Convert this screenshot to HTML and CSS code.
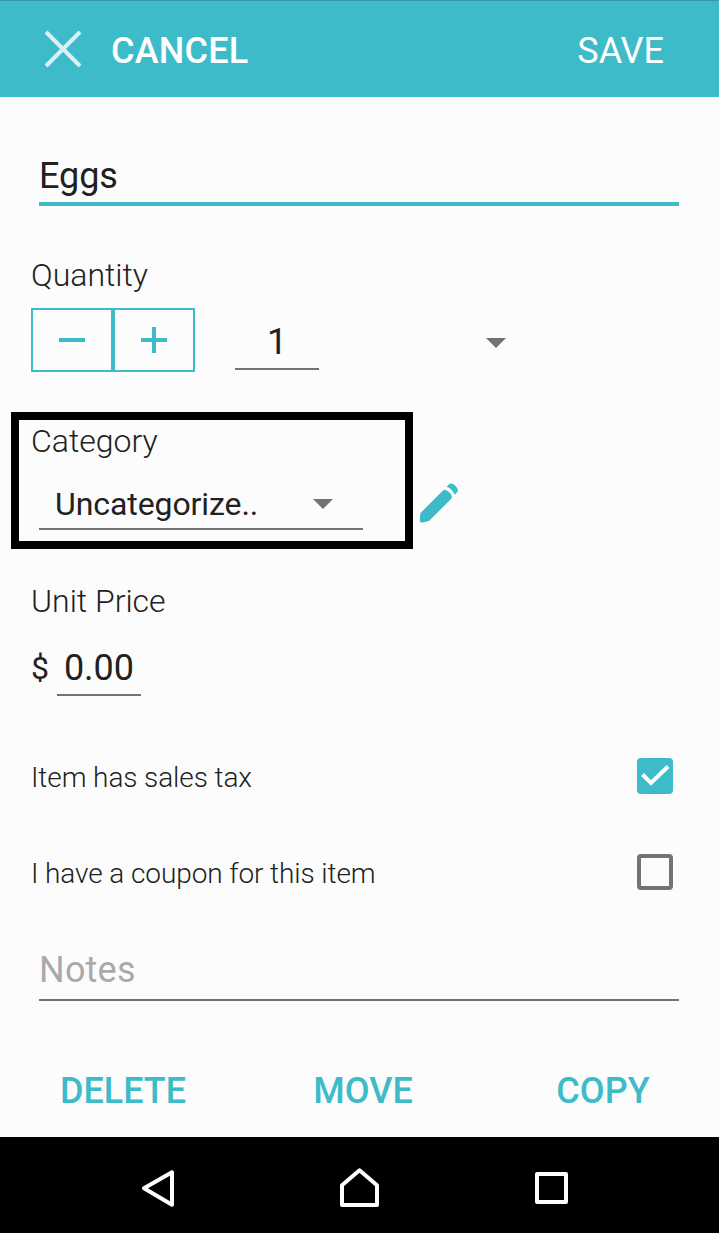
FILE: index.html
```html
<!DOCTYPE html>
<html lang="en">
<head>
    <meta charset="UTF-8">
    <meta name="viewport" content="width=device-width, initial-scale=1.0">
    <title>Edit item</title>
    <link rel="stylesheet" href="styles.css">
</head>
<body>
    <header class="toolbar">
        <div class="cancel">
            <svg class="close-icon" width="38" height="38" viewBox="0 0 38 38">
                <path d="M2 2L36 36M36 2L2 36"/>
            </svg>
            <span>CANCEL</span>
        </div>
        <span class="save">SAVE</span>
    </header>

    <main class="form">
        <div class="field name">Eggs</div>

        <section class="quantity">
            <div class="label">Quantity</div>
            <div class="quantity-row">
                <div class="stepper">
                    <div class="step">
                        <svg width="26" height="26" viewBox="0 0 26 26"><path d="M0 13H26"/></svg>
                    </div>
                    <div class="step">
                        <svg width="26" height="26" viewBox="0 0 26 26"><path d="M0 13H26M13 0V26"/></svg>
                    </div>
                </div>
                <div class="small-input">1</div>
                <svg class="arrow unit-arrow" width="20" height="10" viewBox="0 0 20 10"><path d="M0 0H20L10 10Z"/></svg>
            </div>
        </section>

        <section class="category-row">
            <div class="category">
                <div class="label">Category</div>
                <div class="select">
                    <span>Uncategorize..</span>
                    <svg class="arrow" width="20" height="10" viewBox="0 0 20 10"><path d="M0 0H20L10 10Z"/></svg>
                </div>
            </div>
            <svg class="pencil" width="40" height="40" viewBox="0 0 40 40">
                <path d="M1.500 30L24 7.500Q25.300 6.400 27 7.200C30 8.500 32 10.500 32.800 13.200Q33.200 14.800 32 16L10 38L5 39.200Q1.200 39.800 .9 38.500Q.5 37.500 1.500 30Z"/>
                <path d="M27.600 3.800L30 1.300Q31.700 0 33.400 .8C36 2 38 4 38.800 6.600Q39.100 8.300 38 9.500L35.700 11.700C34.500 8.300 31.500 5.200 27.600 3.800Z"/>
            </svg>
        </section>

        <section class="price">
            <div class="label">Unit Price</div>
            <div class="price-row">
                <span class="currency">$</span>
                <div class="small-input">0.00</div>
            </div>
        </section>

        <div class="option">
            <span>Item has sales tax</span>
            <div class="checkbox checked">
                <svg width="36" height="36" viewBox="0 0 36 36"><path d="M5.500 16.500L14 25L31 8.500"/></svg>
            </div>
        </div>
        <div class="option">
            <span>I have a coupon for this item</span>
            <div class="checkbox"></div>
        </div>

        <div class="field notes">Notes</div>

        <div class="actions">
            <span>DELETE</span>
            <span>MOVE</span>
            <span>COPY</span>
        </div>
    </main>

    <nav class="navbar">
        <svg width="56" height="44" viewBox="0 0 56 44"><path d="M5 22.300L33 6.300V38.700Z"/></svg>
        <svg width="56" height="44" viewBox="0 0 56 44"><path d="M11 19.200L28.500 4.300L46 19.200V39H11Z"/></svg>
        <svg width="56" height="44" viewBox="0 0 56 44"><path d="M14 8H43V36H14Z"/></svg>
    </nav>
</body>
</html>
```

FILE: styles.css
```css
* {
    box-sizing: border-box;
}
body {
    margin: 0;
    font-family: Roboto, sans-serif;
    font-size: 36px;
    color: #212121;
    background: #fcfcfc;
    overflow: hidden;
}
svg {
    display: block;
    flex: none;
    fill: none;
}

/* top bar */
.toolbar {
    display: flex;
    align-items: center;
    justify-content: space-between;
    height: 97px;
    padding: 4px 55px 0 44px;
    border-top: 1px solid #3498a2;
    background: #3dbbc8;
    color: #fff;
}
.cancel {
    display: flex;
    align-items: center;
    gap: 29px;
    font-weight: 500;
    letter-spacing: 0.2px;
}
.close-icon {
    margin-top: -4px;
    stroke: #d8f1f4;
    stroke-width: 4;
}

/* form */
.form {
    height: 1040px;
    padding-top: 53px;
}
.field {
    margin: 0 40px 0 39px;
}
.name {
    line-height: 52px;
    border-bottom: 4px solid #3dbbc8;
    letter-spacing: -0.1px;
}
.label {
    font-size: 32px;
    font-weight: 300;
    line-height: 40px;
}
.small-input {
    width: 84px;
    line-height: 52px;
    text-align: center;
    border-bottom: 2px solid #737373;
}
.arrow {
    fill: #737373;
}

.quantity {
    padding: 49px 31px 0;
}
.quantity-row {
    display: flex;
    align-items: flex-end;
    height: 64px;
    margin-top: 13px;
}
.quantity-row .small-input {
    margin: 0 0 2px 40px;
}
.unit-arrow {
    margin: 0 0 24px 167px;
}
.stepper {
    display: flex;
}
.step {
    display: flex;
    align-items: center;
    justify-content: center;
    width: 82px;
    height: 64px;
    border: 2px solid #3dbbc8;
}
.step path {
    stroke: #3dbbc8;
    stroke-width: 4;
}

.category-row {
    display: flex;
    align-items: flex-end;
    padding: 40px 11px 0;
}
.category {
    width: 402px;
    height: 137px;
    padding: 1px 12px 0;
    border: 8px solid #000;
}
.select {
    display: flex;
    align-items: center;
    justify-content: space-between;
    width: 324px;
    margin: 19px 0 0 8px;
    padding: 0 30px 0 16px;
    border-bottom: 2px solid #737373;
    font-size: 32px;
    line-height: 48px;
    letter-spacing: -0.08px;
}
.pencil {
    margin: 0 0 26px 6px;
    fill: #3dbbc8;
}

.price {
    padding: 32px 31px 0;
}
.price-row {
    display: flex;
    margin-top: 21px;
}
.currency {
    width: 26px;
    font-size: 32px;
    line-height: 52px;
}

.option {
    display: flex;
    align-items: center;
    justify-content: space-between;
    height: 36px;
    margin: 60px 46px 0 31px;
    font-size: 28px;
    font-weight: 300;
    letter-spacing: -0.1px;
}
.option span {
    padding-top: 2px;
}
.price + .option {
    margin-top: 62px;
}
.checkbox {
    width: 36px;
    height: 36px;
    border: 4px solid #737373;
    border-radius: 4px;
}
.checked {
    border: none;
    background: #3dbbc8;
}
.checked path {
    stroke: #fff;
    stroke-width: 4;
}

.notes {
    margin-top: 50px;
    padding-top: 2px;
    line-height: 57px;
    letter-spacing: 0.2px;
    color: #aaa;
    border-bottom: 2px solid #737373;
}
.actions {
    display: grid;
    grid-template-columns: repeat(3, 240px);
    padding: 69px 0 0 3px;
    font-weight: 500;
    line-height: 42px;
    text-align: center;
    color: #3dbbc8;
}

/* system navigation */
.navbar {
    display: flex;
    gap: 136px;
    height: 96px;
    padding: 29px 0 0 139px;
    background: #000;
}
.navbar path {
    stroke: #fff;
    stroke-width: 4;
    stroke-linejoin: round;
}
```
